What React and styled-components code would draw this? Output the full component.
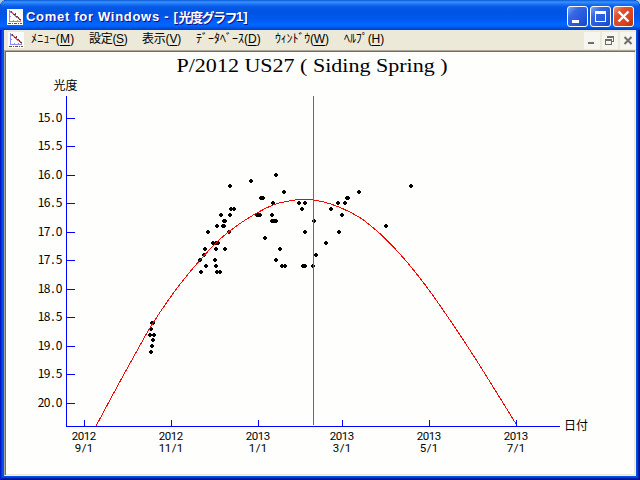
import React from "react";
import styled, { createGlobalStyle } from "styled-components";

const GlobalStyle = createGlobalStyle`
  html, body {
    margin: 0;
    padding: 0;
    overflow: hidden;
    background: #a4cbdc;
  }
`;

const Window = styled.div`
  display: flex;
  flex-direction: column;
  width: 640px;
  height: 480px;
  box-sizing: border-box;
  padding: 0 4px 4px;
  border-radius: 7px 7px 0 0;
  background: #0550e6;
  box-shadow: inset 1px 0 #0019cf, inset -1px 0 #00138c, inset 0 -1px #00138c,
    inset 2px 0 #0831d9, inset -2px 0 #001ea0, inset 0 -2px #001ea0,
    inset -3px 0 #0441d8, inset 0 -3px #0441d8;
  overflow: hidden;
`;

const TitleBar = styled.div`
  display: flex;
  align-items: center;
  flex: none;
  height: 30px;
  margin: 0 -4px;
  padding: 3px 6px 0 7px;
  box-sizing: border-box;
  background: linear-gradient(
    180deg,
    #0a58d8 0,
    #3a93ff 2px,
    #1c74f4 4px,
    #0558e6 7px,
    #0054e3 13px,
    #0058ee 19px,
    #0066ff 24px,
    #0063fb 26px,
    #0050df 28px,
    #003fc4 30px
  );
`;

const Title = styled.h1`
  display: flex;
  flex: 1;
  margin: 0 0 0 3px;
  color: #fff;
  font: bold 13px/18px "Liberation Sans", sans-serif;
  text-shadow: 1px 1px #0f1089;
  white-space: pre;
`;

const TitlePart = styled.span`
  font-family: ${(p) => (p.$jp ? '"Noto Sans CJK JP", sans-serif' : '"Liberation Sans", sans-serif')};
  letter-spacing: ${(p) => p.$spacing}px;
`;

const Controls = styled.div`
  display: flex;
  gap: 2px;
`;

const ControlButton = styled.button`
  width: 21px;
  height: 21px;
  padding: 0;
  box-sizing: border-box;
  border: 1px solid #fff;
  border-radius: 3px;
  background: ${(p) =>
    p.$close
      ? "linear-gradient(135deg, #f0997f 0, #e0512c 30%, #d8431c 70%, #b5310e 100%)"
      : "linear-gradient(135deg, #7ea6f8 0, #3568e4 30%, #2456dc 70%, #1747c0 100%)"};

  svg {
    display: block;
  }
`;

const MenuBar = styled.div`
  display: flex;
  align-items: center;
  flex: none;
  height: 20px;
  padding-left: 4px;
  background: #ece9d8;
`;

const Menu = styled.div`
  display: flex;
  flex: 1;
  margin: -2px 0 0 7px;
`;

const MenuItem = styled.span`
  width: ${(p) => p.$width}px;
  color: #000;
  font: 12px/18px "Liberation Sans", "Noto Sans CJK JP", sans-serif;
  letter-spacing: ${(p) => p.$spacing}px;
  white-space: nowrap;

  u {
    text-underline-offset: 2px;
  }
`;

const MdiControls = styled.div`
  display: flex;
  gap: 2px;
`;

const MdiButton = styled.button`
  width: 16px;
  height: 17px;
  padding: 0;
  border: none;
  background: #f6f5ef;

  svg {
    display: block;
  }
`;

const Client = styled.div`
  flex: 1;
  min-height: 0;
  box-sizing: border-box;
  border: 1px solid;
  border-color: #aca899 #f1efe2 #f1efe2 #aca899;
  box-shadow: inset 1px 1px #716f64, inset -1px -1px #ece9d8;
  background: #fefefd;

  svg {
    display: block;
  }
`;

const ChartTitle = styled.text`
  font: 19px "Liberation Serif", serif;
  fill: #000;
`;

const AxisTitle = styled.text`
  font: 12px "Noto Sans CJK JP", sans-serif;
  fill: #000;
`;

const TickText = styled.text`
  font: 12px "Noto Sans CJK JP", sans-serif;
  text-anchor: middle;
  fill: #000;
`;

const DateText = styled(TickText)`
  font: 11.5px Roboto, "Liberation Sans", sans-serif;
`;

const menus = [
  { label: "ﾒﾆｭｰ", hotkey: "M", width: 58, spacing: 0.2 },
  { label: "設定", hotkey: "S", width: 53, spacing: -0.3 },
  { label: "表示", hotkey: "V", width: 54, spacing: -0.2 },
  { label: "ﾃﾞｰﾀﾍﾞｰｽ", hotkey: "D", width: 79, spacing: 0 },
  { label: "ｳｨﾝﾄﾞｳ", hotkey: "W", width: 69, spacing: -0.2 },
  { label: "ﾍﾙﾌﾟ", hotkey: "H", width: 50, spacing: -0.1 },
];

const magnitudes = [
  [118, "15.0"], [146, "15.5"], [175, "16.0"], [203, "16.5"],
  [232, "17.0"], [260, "17.5"], [289, "18.0"], [317, "18.5"],
  [346, "19.0"], [374, "19.5"], [403, "20.0"],
];

const dates = [
  [84, "2012", "9/1"], [171, "2012", "11/1"], [258, "2013", "1/1"],
  [342, "2013", "3/1"], [429, "2013", "5/1"], [516, "2013", "7/1"],
];

const observations = [
  [152, 323], [153, 323], [151, 329], [150, 335], [154, 335], [153, 340], [152, 346], [151, 352],
  [200, 260], [201, 272], [204, 255], [205, 249], [206, 266], [208, 232], [213, 243], [216, 243],
  [218, 243], [215, 260], [216, 249], [216, 266], [217, 272], [220, 272], [217, 226], [223, 226],
  [224, 226], [224, 221], [225, 221], [221, 215], [225, 249], [229, 232], [230, 186], [230, 215],
  [231, 209], [234, 209], [251, 181], [257, 215], [259, 215], [260, 215], [261, 198], [263, 198],
  [265, 238], [272, 215], [273, 203], [272, 221], [274, 221], [276, 221], [276, 175], [276, 260],
  [280, 249], [282, 266], [285, 266], [284, 192], [299, 203], [302, 209], [305, 203], [305, 232],
  [303, 266], [305, 266], [313, 266], [314, 221], [316, 255], [326, 243], [331, 209], [338, 203],
  [339, 232], [342, 215], [345, 203], [347, 198], [348, 198], [359, 192], [386, 226], [411, 186],
];

const curve = [
  [96, 426], [120.5, 380.5], [141, 343.5], [152.5, 323.8], [172, 295], [191.5, 270],
  [213.5, 245.5], [229, 231.5], [250, 217], [273, 205], [289, 201],
  [304, 199.4], [322, 201.5], [342, 208.3], [360, 217.7], [373.3, 227.9],
  [386.7, 240], [403.3, 257.8], [416.7, 274], [429.7, 291], [453.3, 325], [475, 358],
  [500, 398], [517, 425.5],
];

// Catmull-Rom spline through the predicted magnitudes
const smoothPath = (pts) =>
  pts.slice(1).reduce((d, p, i) => {
    const a = pts[i - 1] || pts[i];
    const b = pts[i];
    const c = pts[i + 2] || p;
    return `${d}C${b[0] + (p[0] - a[0]) / 6} ${b[1] + (p[1] - a[1]) / 6} ${p[0] - (c[0] - b[0]) / 6} ${
      p[1] - (c[1] - b[1]) / 6
    } ${p[0]} ${p[1]}`;
  }, `M${pts[0][0]} ${pts[0][1]}`);

// fixed 6px pitch, centred on x
const pitch = (x, text) => [...text].map((_, i) => x + (i - (text.length - 1) / 2) * 6).join(" ");

const AppIcon = () => (
  <svg width="16" height="16" viewBox="0 0 16 16" shapeRendering="crispEdges">
    <rect width="16" height="16" fill="#fff" />
    <path d="M2.5 1V12.5H14M3 3.5H4M3 7.5H4M6.5 12V11M10.5 12V11" stroke="#8c8cf0" fill="none" />
    <path d="M3 2L14 11.5" stroke="#e06060" strokeWidth="1.4" />
    <path d="M4 2h1v2H4zM6 5h2v1H6zM8 4h1v2H8zM9 7h2v1H9zM11 8h1v2h-1zM12 10h2v1h-2z" fill="#703838" />
    <path d="M1 14.5H4M5 14.5H6M7 14.5H10M11 14.5H12M13 14.5H15" stroke="#555" />
  </svg>
);

const LightCurve = () => (
  <svg width="630" height="424" viewBox="5 51 630 424">
    <ChartTitle x="176.5" y="72" textLength="271" lengthAdjust="spacingAndGlyphs">
      P/2012 US27 ( Siding Spring )
    </ChartTitle>
    <AxisTitle x="53.5" y="90">光度</AxisTitle>
    <AxisTitle x="564" y="430">日付</AxisTitle>
    {magnitudes.map(([y, label]) => (
      <TickText key={label} x={pitch(50, label)} y={y + 4}>{label}</TickText>
    ))}
    {dates.map(([x, year, day]) => (
      <React.Fragment key={x}>
        <DateText x={pitch(x, year)} y="440">{year}</DateText>
        <DateText x={pitch(x, day)} y="452">{day}</DateText>
      </React.Fragment>
    ))}
    <g shapeRendering="crispEdges" fill="none">
      <path
        d={observations.map(([x, y]) => `M${x - 2} ${y - 1}h4v2h-4zM${x - 1} ${y - 2}h2v4h-2z`).join("")}
        fill="#000"
      />
      <path d={smoothPath(curve)} stroke="#f00" />
      <path d="M313.5 96V425" stroke="#f0f" />
      <path
        d={`M66.5 96V426.5H560${magnitudes.map(([y]) => `M67 ${y + 0.5}h8`).join("")}${dates
          .map(([x]) => `M${x + 0.5} 420v6`)
          .join("")}`}
        stroke="#00f"
      />
    </g>
  </svg>
);

const App = () => (
  <>
    <GlobalStyle />
    <Window>
      <TitleBar>
        <AppIcon />
        <Title>
          <TitlePart $spacing={0.7}>Comet for Windows - [</TitlePart>
          <TitlePart $jp $spacing={-1.5}>光度グラフ</TitlePart>
          <TitlePart $spacing={0}>1]</TitlePart>
        </Title>
        <Controls>
          <ControlButton aria-label="minimize">
            <svg width="19" height="19"><path d="M4 13h7v3H4z" fill="#fff" /></svg>
          </ControlButton>
          <ControlButton aria-label="maximize">
            <svg width="19" height="19">
              <path d="M4 4h11v11H4zM5 7v7h9V7z" fill="#fff" fillRule="evenodd" />
            </svg>
          </ControlButton>
          <ControlButton $close aria-label="close">
            <svg width="19" height="19">
              <path d="M4.5 4.5L14.5 14.5M14.5 4.5L4.5 14.5" stroke="#fff" strokeWidth="2.4" />
            </svg>
          </ControlButton>
        </Controls>
      </TitleBar>
      <MenuBar>
        <AppIcon />
        <Menu>
          {menus.map((m) => (
            <MenuItem key={m.hotkey} $width={m.width} $spacing={m.spacing}>
              {m.label}(<u>{m.hotkey}</u>)
            </MenuItem>
          ))}
        </Menu>
        <MdiControls>
          <MdiButton aria-label="minimize chart">
            <svg width="16" height="17"><path d="M4 10h6v2H4z" fill="#716f64" /></svg>
          </MdiButton>
          <MdiButton aria-label="restore chart">
            <svg width="16" height="17" fill="none" stroke="#716f64" shapeRendering="crispEdges">
              <path d="M5 5V4.5H11.5V9.5H10M5 5.5H12M3.5 7.5H9.5V12.5H3.5zM3 8.5H10" />
            </svg>
          </MdiButton>
          <MdiButton aria-label="close chart">
            <svg width="16" height="17">
              <path d="M4.5 5L11.5 12M11.5 5L4.5 12" stroke="#716f64" strokeWidth="2" />
            </svg>
          </MdiButton>
        </MdiControls>
      </MenuBar>
      <Client>
        <LightCurve />
      </Client>
    </Window>
  </>
);

export default App;
